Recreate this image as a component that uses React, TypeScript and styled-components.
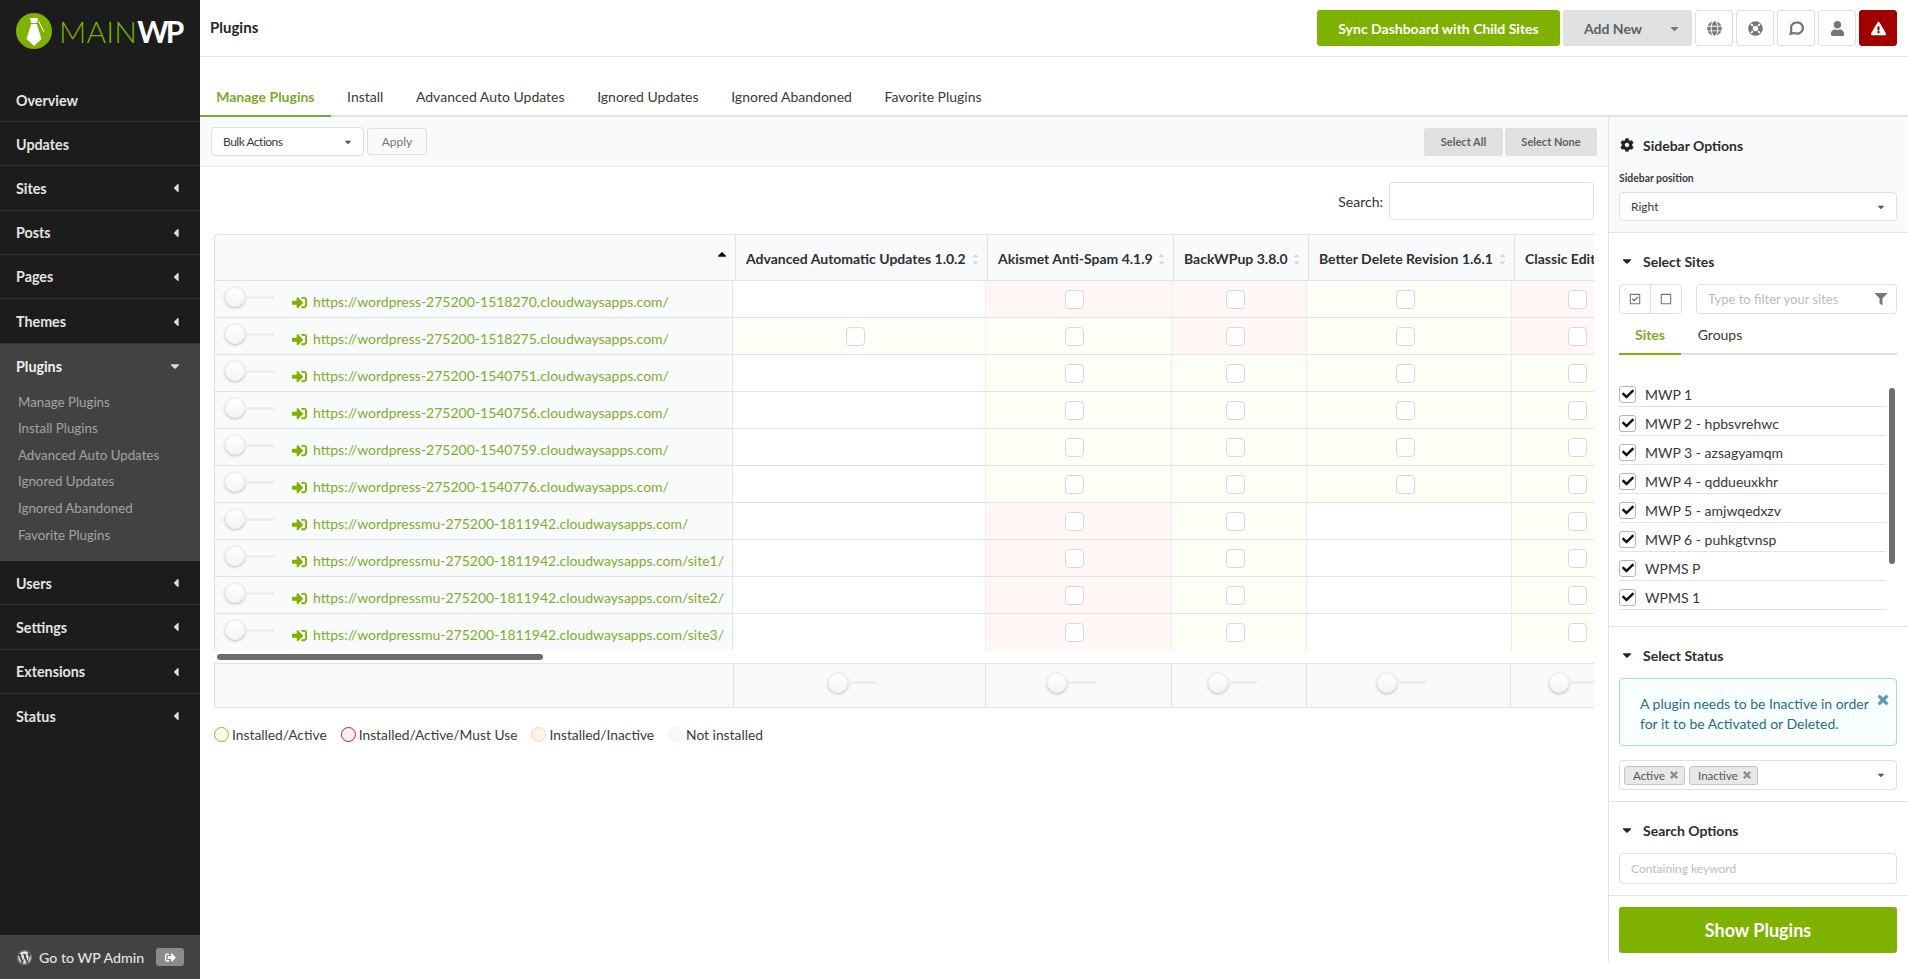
import React from 'react';
import styled, { createGlobalStyle } from 'styled-components';
import {
    FaCaretDown,
    FaCaretLeft,
    FaCaretUp,
    FaCheck,
    FaCog,
    FaExclamationTriangle,
    FaFilter,
    FaGlobe,
    FaLifeRing,
    FaRegCheckSquare,
    FaRegSquare,
    FaSignInAlt,
    FaSignOutAlt,
    FaTimes,
    FaUser,
    FaWordpress,
} from 'react-icons/fa';

const GREEN = '#7fb100';
const LINE = '#e2e3e4';
const PANEL = '#f9fafb';

const GlobalStyle = createGlobalStyle`
    * { box-sizing: border-box; }
    html, body { margin: 0; padding: 0; height: 100%; overflow: hidden; }
    body {
        font-family: Lato, "Open Sans", "Liberation Sans", sans-serif;
        font-size: 14px;
        color: #303030;
        background: #fff;
    }
`;

const Page = styled.div`
    display: flex;
    width: 1908px;
    height: 979px;
`;

/* left navigation */
const Nav = styled.nav`
    width: 200px;
    flex-shrink: 0;
    display: flex;
    flex-direction: column;
    background: #1c1c1c;
`;

const LogoBlock = styled.div`
    height: 78px;
    padding: 13px 0 0 16px;
    display: flex;
    align-items: flex-start;
`;

const LogoText = styled.div`
    margin-left: 7px;
    height: 36px;
    display: flex;
    align-items: center;
    font-size: 30px;
    line-height: 36px;
`;

const LogoMain = styled.span`
    color: ${GREEN};
    font-weight: 300;
    letter-spacing: 0.2px;
`;

const LogoWp = styled.span`
    color: #fff;
    font-weight: 700;
    letter-spacing: -3px;
`;

const NavItem = styled.div<{ $last?: boolean }>`
    height: 44.2px;
    padding: 1px 17px 0 16px;
    display: flex;
    align-items: center;
    justify-content: space-between;
    border-bottom: ${(p) => (p.$last ? 'none' : '1px solid #333')};
    color: #e4e4e4;
    font-size: 14.3px;
    font-weight: 700;
    svg {
        font-size: 14px;
        color: #dcdcdc;
    }
`;

const NavGroup = styled.div`
    height: 218px;
    background: #424242;
    border-top: 1px solid #333;
`;

const NavGroupHead = styled(NavItem)`
    border-bottom: none;
    color: #f0f0f0;
    padding: 0 18px 0 16px;
`;

const NavSubList = styled.div`
    padding-top: 0;
`;

const NavSubItem = styled.div`
    height: 26.6px;
    padding-left: 18px;
    display: flex;
    align-items: center;
    color: #a3a3a3;
    font-size: 13.3px;
`;

const NavFooter = styled.div`
    margin-top: auto;
    height: 44px;
    padding: 0 16px 0 17px;
    display: flex;
    align-items: center;
    background: #424242;
    color: #e4e4e4;
    font-size: 14.2px;
    font-weight: 500;
    svg {
        font-size: 15px;
    }
`;

const NavFooterText = styled.span`
    margin-left: 7px;
    flex: 1;
`;

const NavFooterButton = styled.span`
    width: 28px;
    height: 18px;
    border-radius: 3px;
    background: #8b8b8b;
    display: flex;
    align-items: center;
    justify-content: center;
    color: #fff;
    svg {
        font-size: 11px;
    }
`;

/* top bar */
const Content = styled.div`
    flex: 1;
    min-width: 0;
    display: flex;
    flex-direction: column;
`;

const Header = styled.header`
    height: 57px;
    flex-shrink: 0;
    padding: 0 11px 0 10px;
    display: flex;
    align-items: flex-start;
    justify-content: space-between;
    border-bottom: 1px solid ${LINE};
`;

const PageTitle = styled.h1`
    margin: 17px 0 0;
    font-size: 15px;
    line-height: 20px;
    font-weight: 700;
    color: #262626;
`;

const HeaderActions = styled.div`
    margin-top: 10px;
    display: flex;
    gap: 3px;
`;

const SyncButton = styled.button`
    width: 243px;
    height: 36px;
    border: 0;
    border-radius: 3px;
    background: ${GREEN};
    color: #fff;
    font: 700 14px Lato, sans-serif;
`;

const AddNewButton = styled.button`
    width: 129px;
    height: 36px;
    padding: 0 11px 0 21px;
    border: 0;
    border-radius: 3px;
    background: #e0e1e2;
    color: #5f5f5f;
    font: 700 14px Lato, sans-serif;
    display: flex;
    align-items: center;
    justify-content: space-between;
    svg {
        font-size: 13px;
        color: #777;
    }
`;

const IconButton = styled.button<{ $danger?: boolean }>`
    width: 38px;
    height: 36px;
    padding: 0;
    border-radius: 3px;
    border: 1px solid ${(p) => (p.$danger ? '#a00000' : '#dedfe0')};
    background: ${(p) => (p.$danger ? '#a00000' : '#fff')};
    color: ${(p) => (p.$danger ? '#fff' : '#767676')};
    display: flex;
    align-items: center;
    justify-content: center;
    font-size: 15px;
`;

/* tabs */
const TabBar = styled.div`
    height: 60px;
    flex-shrink: 0;
    display: flex;
    align-items: flex-end;
    border-bottom: 2px solid #e0e0e0;
`;

const Tab = styled.div<{ $active?: boolean }>`
    padding: 0 16.4px 8px 16.2px;
    margin-bottom: -2px;
    line-height: 20px;
    font-size: 14px;
    font-weight: ${(p) => (p.$active ? 700 : 400)};
    color: ${(p) => (p.$active ? '#7cab2a' : '#3a3a3a')};
    border-bottom: 2px solid ${(p) => (p.$active ? '#7aa83c' : 'transparent')};
`;

const Columns = styled.div`
    flex: 1;
    min-height: 0;
    display: flex;
`;

const Main = styled.main`
    flex: 1;
    min-width: 0;
`;

const Toolbar = styled.div`
    height: 50px;
    padding: 0 11px;
    display: flex;
    align-items: center;
    justify-content: space-between;
    background: ${PANEL};
    border-bottom: 1px solid ${LINE};
`;

const ToolGroup = styled.div<{ $gap: number }>`
    display: flex;
    align-items: center;
    gap: ${(p) => p.$gap}px;
`;

const Select = styled.div<{ $width?: number; $height?: number; $tight?: boolean }>`
    width: ${(p) => (p.$width ? `${p.$width}px` : '100%')};
    height: ${(p) => p.$height ?? 29}px;
    padding: 0 10px 0 11px;
    display: flex;
    align-items: center;
    justify-content: space-between;
    background: #fff;
    border: 1px solid #dfe0e1;
    border-radius: 4px;
    font-size: 12px;
    letter-spacing: ${(p) => (p.$tight ? '-0.5px' : '0')};
    color: #3a3a3a;
    svg {
        font-size: 10px;
        color: #555;
    }
`;

const GhostButton = styled.button`
    width: 60px;
    height: 27px;
    padding: 0;
    border: 1px solid #dfe0e1;
    border-radius: 3px;
    background: ${PANEL};
    color: #777;
    font: 12px Lato, sans-serif;
`;

const GreyButton = styled.button<{ $width: number }>`
    width: ${(p) => p.$width}px;
    height: 28px;
    padding: 0;
    border: 0;
    border-radius: 3px;
    background: #dfe0e1;
    color: #5f5f5f;
    font: 700 11px Lato, sans-serif;
`;

const TableArea = styled.div`
    padding: 0 14px;
`;

const SearchRow = styled.div`
    height: 67px;
    padding-top: 15px;
    display: flex;
    align-items: flex-start;
    justify-content: flex-end;
    gap: 6px;
`;

const SearchLabel = styled.label`
    line-height: 40px;
    font-size: 14px;
    color: #333;
`;

const SearchInput = styled.div`
    width: 205px;
    height: 38px;
    border: 1px solid #dfe0e1;
    border-radius: 4px;
    background: #fff;
`;

const TableClip = styled.div`
    width: 1380px;
    overflow: hidden;
`;

const Grid = styled.div<{ $columns: string }>`
    display: grid;
    grid-template-columns: ${(p) => p.$columns};
    width: 1500px;
`;

const HeadRow = styled(Grid)`
    height: 47px;
    background: ${PANEL};
    border-top: 1px solid ${LINE};
    border-left: 1px solid ${LINE};
    border-bottom: 1px solid ${LINE};
    border-top-left-radius: 4px;
`;

const HeadCell = styled.div`
    padding: 2px 7px 0 10px;
    display: flex;
    align-items: center;
    justify-content: space-between;
    white-space: nowrap;
    overflow: hidden;
    border-right: 1px solid ${LINE};
    font-size: 14px;
    font-weight: 700;
    color: #303030;
`;

const FirstHeadCell = styled(HeadCell)`
    justify-content: flex-end;
    align-items: flex-start;
    padding: 13px 6px 0 0;
`;

const SortMark = styled.span`
    display: flex;
    flex-direction: column;
    flex-shrink: 0;
    margin-left: 4px;
    color: #d6d6d6;
    font-size: 9px;
    line-height: 5px;
    svg {
        display: block;
        margin: -1px 0;
    }
`;

const BodyRow = styled(Grid)<{ $last?: boolean }>`
    height: 37px;
    border-left: 1px solid ${LINE};
    border-bottom: ${(p) => (p.$last ? 'none' : `1px solid ${LINE}`)};
`;

const SiteCell = styled.div`
    padding-left: 10px;
    display: flex;
    align-items: flex-start;
    background: ${PANEL};
    border-right: 1px solid ${LINE};
`;

const SliderWrap = styled.span`
    margin-top: 6px;
    display: flex;
    align-items: center;
    flex-shrink: 0;
`;

const SliderKnob = styled.span`
    width: 20px;
    height: 20px;
    border-radius: 50%;
    background: linear-gradient(#fff, #f4f4f4);
    box-shadow: 0 1px 3px rgba(0, 0, 0, 0.28);
    border: 1px solid #eee;
`;

const SliderTrack = styled.span`
    width: 29px;
    height: 3px;
    background: #eeeeee;
`;

const SiteLink = styled.a`
    margin: 11px 0 0 18px;
    display: flex;
    align-items: center;
    line-height: 20px;
    font-size: 14px;
    color: #7fae2d;
    white-space: nowrap;
    svg {
        font-size: 15px;
        margin-right: 6px;
        color: ${GREEN};
    }
`;

const STATE_COLOR = { none: '#fff', active: '#fcfff6', must: '#fff6f6' };

const StatusCell = styled.div<{ $state: keyof typeof STATE_COLOR }>`
    padding-right: 8px;
    display: flex;
    align-items: center;
    justify-content: center;
    background: ${(p) => STATE_COLOR[p.$state]};
    border-right: 1px solid #eceded;
`;

const PluginBox = styled.span`
    width: 19px;
    height: 19px;
    border: 1px solid #d8d9da;
    border-radius: 4px;
    background: #fff;
`;

const ScrollThumb = styled.div`
    width: 326px;
    height: 6px;
    margin: 3px 0 3px 3px;
    border-radius: 3px;
    background: #6e6e6e;
`;

const FootRow = styled(Grid)`
    height: 45px;
    background: ${PANEL};
    border-top: 1px solid ${LINE};
    border-left: 1px solid ${LINE};
    border-bottom: 1px solid ${LINE};
    border-bottom-left-radius: 4px;
`;

const FootCell = styled.div`
    padding: 0 14px 6px 0;
    display: flex;
    align-items: center;
    justify-content: center;
    border-right: 1px solid ${LINE};
    ${SliderWrap} {
        margin-top: 0;
    }
`;

const Legend = styled.div`
    margin-top: 16px;
    display: flex;
    height: 20px;
    align-items: center;
    font-size: 13.8px;
    color: #3c3c3c;
`;

const LegendDot = styled.span<{ $fill: string; $ring: string; $gap: number }>`
    width: 15px;
    height: 15px;
    margin-right: 3px;
    margin-left: ${(p) => p.$gap}px;
    border-radius: 50%;
    background: ${(p) => p.$fill};
    border: 1px solid ${(p) => p.$ring};
`;

/* right options column */
const Aside = styled.aside`
    width: 300px;
    flex-shrink: 0;
    height: 846px;
    display: flex;
    flex-direction: column;
    border-left: 1px solid ${LINE};
`;

const AsideSection = styled.section<{ $tinted?: boolean; $last?: boolean }>`
    padding: 18px 11px 11px 10px;
    background: ${(p) => (p.$tinted ? PANEL : '#fff')};
    border-bottom: ${(p) => (p.$last ? 'none' : `1px solid ${LINE}`)};
`;

const SectionTitle = styled.h3`
    margin: 0;
    height: 20px;
    display: flex;
    align-items: center;
    font-size: 14px;
    font-weight: 700;
    color: #2c2c2c;
    svg {
        font-size: 14px;
        margin: 0 9px 0 1px;
        color: #222;
    }
`;

const FieldLabel = styled.div`
    margin: 16px 0 7px;
    height: 14px;
    line-height: 14px;
    font-size: 10.4px;
    font-weight: 700;
    color: #3a3a3a;
`;

const SiteControls = styled.div`
    margin-top: 13px;
    display: flex;
    gap: 14px;
`;

const BoxToggle = styled.div`
    width: 63px;
    height: 30px;
    display: flex;
    border: 1px solid #dfe0e1;
    border-radius: 4px;
    background: #fff;
`;

const BoxToggleHalf = styled.span`
    flex: 1;
    display: flex;
    align-items: center;
    justify-content: center;
    color: #777;
    font-size: 12px;
    & + & {
        border-left: 1px solid #dfe0e1;
    }
`;

const TextField = styled.div<{ $height: number; $size: number }>`
    flex: 1;
    height: ${(p) => p.$height}px;
    padding: 0 9px 0 11px;
    display: flex;
    align-items: center;
    justify-content: space-between;
    border: 1px solid #dfe0e1;
    border-radius: 4px;
    background: #fff;
    font-size: ${(p) => p.$size}px;
    color: #bdbdbd;
    svg {
        font-size: 12px;
        color: #777;
    }
`;

const SmallField = styled(TextField)`
    margin-top: 13px;
`;

const SiteTabs = styled.div`
    height: 41px;
    display: flex;
    border-bottom: 2px solid #e0e0e0;
`;

const SiteTab = styled.div<{ $active?: boolean; $width: number }>`
    width: ${(p) => p.$width}px;
    margin-bottom: -2px;
    padding-top: 11px;
    text-align: center;
    line-height: 20px;
    font-size: 14px;
    font-weight: ${(p) => (p.$active ? 700 : 400)};
    color: ${(p) => (p.$active ? '#7cab2a' : '#3a3a3a')};
    border-bottom: 2px solid ${(p) => (p.$active ? GREEN : 'transparent')};
`;

const SiteListWrap = styled.div`
    margin: 23px 0 5px;
    display: flex;
    align-items: flex-start;
`;

const SiteList = styled.div`
    width: 267px;
`;

const SiteRow = styled.div`
    height: 29px;
    padding-top: 4px;
    display: flex;
    align-items: center;
    border-bottom: 1px solid ${LINE};
    font-size: 14px;
    color: #383838;
`;

const SiteCheck = styled.span`
    width: 17px;
    height: 17px;
    margin-right: 9px;
    display: flex;
    align-items: center;
    justify-content: center;
    border: 1px solid #b5b5b5;
    border-radius: 3px;
    background: #fff;
    color: #111;
    font-size: 12px;
`;

const ListThumb = styled.div`
    width: 6px;
    height: 176px;
    margin: 10px 0 0 3px;
    border-radius: 3px;
    background: #6e6e6e;
`;

const Notice = styled.div`
    margin-top: 13px;
    height: 68px;
    padding: 15px 6px 0 20px;
    display: flex;
    align-items: flex-start;
    justify-content: space-between;
    border: 1px solid #a9d5de;
    border-radius: 4px;
    background: #f8ffff;
    color: #276f86;
    font-size: 14px;
    line-height: 20px;
    svg {
        flex-shrink: 0;
        margin-top: -1px;
        font-size: 14px;
        color: #5b9bb0;
        stroke: currentColor;
        stroke-width: 30;
    }
`;

const MultiSelect = styled(Select)`
    margin-top: 14px;
    padding-left: 4px;
`;

const ChipGroup = styled.span`
    display: flex;
    gap: 4px;
`;

const Chip = styled.span`
    height: 19px;
    padding: 0 5px 0 8px;
    display: flex;
    align-items: center;
    gap: 4px;
    border: 1px solid #c4c4c4;
    border-radius: 3px;
    background: #e8e8e8;
    color: #555;
    font-size: 11.5px;
    svg {
        font-size: 10px;
        color: #8a8a8a;
        stroke: currentColor;
        stroke-width: 40;
    }
`;

const ActionSection = styled.div`
    padding: 11px 11px 10px 10px;
`;

const ShowButton = styled.button`
    width: 100%;
    height: 46px;
    border: 0;
    border-radius: 3px;
    background: ${GREEN};
    color: #fff;
    font: 700 18px Lato, sans-serif;
`;

const HEAD_COLUMNS = '521px 252px 186px 135px 206px 199px';
const BODY_COLUMNS = '518px 253px 186px 135px 205px 140px';
const FOOT_COLUMNS = '519px 252px 186px 135px 204px 140px';

const MENU_TOP = ['Overview', 'Updates', 'Sites', 'Posts', 'Pages', 'Themes'];
const MENU_BOTTOM = ['Users', 'Settings', 'Extensions', 'Status'];
const SUB_MENU = [
    'Manage Plugins',
    'Install Plugins',
    'Advanced Auto Updates',
    'Ignored Updates',
    'Ignored Abandoned',
    'Favorite Plugins',
];
const NO_ARROW = ['Overview', 'Updates'];

const TABS = [
    'Manage Plugins',
    'Install',
    'Advanced Auto Updates',
    'Ignored Updates',
    'Ignored Abandoned',
    'Favorite Plugins',
];

const PLUGINS = [
    'Advanced Automatic Updates 1.0.2',
    'Akismet Anti-Spam 4.1.9',
    'BackWPup 3.8.0',
    'Better Delete Revision 1.6.1',
    'Classic Editor 1.6',
];

type CellState = keyof typeof STATE_COLOR;

const N: CellState = 'none';
const A: CellState = 'active';
const M: CellState = 'must';

const ROWS: { url: string; cells: CellState[] }[] = [
    { url: 'https://wordpress-275200-1518270.cloudwaysapps.com/', cells: [N, M, M, A, M] },
    { url: 'https://wordpress-275200-1518275.cloudwaysapps.com/', cells: [A, A, M, A, M] },
    { url: 'https://wordpress-275200-1540751.cloudwaysapps.com/', cells: [N, A, A, A, A] },
    { url: 'https://wordpress-275200-1540756.cloudwaysapps.com/', cells: [N, A, A, A, A] },
    { url: 'https://wordpress-275200-1540759.cloudwaysapps.com/', cells: [N, A, A, A, A] },
    { url: 'https://wordpress-275200-1540776.cloudwaysapps.com/', cells: [N, A, A, A, A] },
    { url: 'https://wordpressmu-275200-1811942.cloudwaysapps.com/', cells: [N, M, A, N, A] },
    { url: 'https://wordpressmu-275200-1811942.cloudwaysapps.com/site1/', cells: [N, M, A, N, A] },
    { url: 'https://wordpressmu-275200-1811942.cloudwaysapps.com/site2/', cells: [N, M, A, N, A] },
    { url: 'https://wordpressmu-275200-1811942.cloudwaysapps.com/site3/', cells: [N, M, A, N, A] },
];

const SITES = [
    'MWP 1',
    'MWP 2 - hpbsvrehwc',
    'MWP 3 - azsagyamqm',
    'MWP 4 - qddueuxkhr',
    'MWP 5 - amjwqedxzv',
    'MWP 6 - puhkgtvnsp',
    'WPMS P',
    'WPMS 1',
];

const LogoMark = () => (
    <svg width="36" height="36" viewBox="0 0 36 36">
        <circle cx="18" cy="18" r="18" fill={GREEN} />
        <path d="M14 5 L22 5 L21 10 L15 10 Z" fill="#fff" />
        <path d="M15.2 11 L20.8 11 L25.5 26 L18 33 L10.5 26 Z" fill="#fff" />
        <path d="M22.5 8 L28 19" stroke="#fff" strokeWidth="1" fill="none" />
    </svg>
);

const CommentIcon = () => (
    <svg width="16" height="16" viewBox="0 0 24 24" fill="none" stroke="currentColor" strokeWidth="3.4">
        <path d="M13 3.5a8.5 8.5 0 0 0-8 11.2L4 20.5l5.6-1.2A8.5 8.5 0 1 0 13 3.5z" />
    </svg>
);

const Slider = () => (
    <SliderWrap>
        <SliderKnob />
        <SliderTrack />
    </SliderWrap>
);

const App = () => {
    return (
        <Page>
            <GlobalStyle />
            <Nav>
                <LogoBlock>
                    <LogoMark />
                    <LogoText>
                        <LogoMain>MAIN</LogoMain>
                        <LogoWp>WP</LogoWp>
                    </LogoText>
                </LogoBlock>
                {MENU_TOP.map((label, i) => (
                    <NavItem key={label} $last={i === MENU_TOP.length - 1}>
                        {label}
                        {!NO_ARROW.includes(label) && <FaCaretLeft />}
                    </NavItem>
                ))}
                <NavGroup>
                    <NavGroupHead>
                        Plugins
                        <FaCaretDown />
                    </NavGroupHead>
                    <NavSubList>
                        {SUB_MENU.map((label) => (
                            <NavSubItem key={label}>{label}</NavSubItem>
                        ))}
                    </NavSubList>
                </NavGroup>
                {MENU_BOTTOM.map((label, i) => (
                    <NavItem key={label} $last={i === MENU_BOTTOM.length - 1}>
                        {label}
                        <FaCaretLeft />
                    </NavItem>
                ))}
                <NavFooter>
                    <FaWordpress />
                    <NavFooterText>Go to WP Admin</NavFooterText>
                    <NavFooterButton>
                        <FaSignOutAlt />
                    </NavFooterButton>
                </NavFooter>
            </Nav>
            <Content>
                <Header>
                    <PageTitle>Plugins</PageTitle>
                    <HeaderActions>
                        <SyncButton>Sync Dashboard with Child Sites</SyncButton>
                        <AddNewButton>
                            Add New
                            <FaCaretDown />
                        </AddNewButton>
                        <IconButton>
                            <FaGlobe />
                        </IconButton>
                        <IconButton>
                            <FaLifeRing />
                        </IconButton>
                        <IconButton>
                            <CommentIcon />
                        </IconButton>
                        <IconButton>
                            <FaUser />
                        </IconButton>
                        <IconButton $danger>
                            <FaExclamationTriangle />
                        </IconButton>
                    </HeaderActions>
                </Header>
                <TabBar>
                    {TABS.map((label, i) => (
                        <Tab key={label} $active={i === 0}>
                            {label}
                        </Tab>
                    ))}
                </TabBar>
                <Columns>
                    <Main>
                        <Toolbar>
                            <ToolGroup $gap={3}>
                                <Select $width={153} $tight>
                                    Bulk Actions
                                    <FaCaretDown />
                                </Select>
                                <GhostButton>Apply</GhostButton>
                            </ToolGroup>
                            <ToolGroup $gap={2}>
                                <GreyButton $width={79}>Select All</GreyButton>
                                <GreyButton $width={92}>Select None</GreyButton>
                            </ToolGroup>
                        </Toolbar>
                        <TableArea>
                            <SearchRow>
                                <SearchLabel>Search:</SearchLabel>
                                <SearchInput />
                            </SearchRow>
                            <TableClip>
                                <HeadRow $columns={HEAD_COLUMNS}>
                                    <FirstHeadCell>
                                        <SortMark>
                                            <FaCaretUp color="#111" size={14} />
                                        </SortMark>
                                    </FirstHeadCell>
                                    {PLUGINS.map((name) => (
                                        <HeadCell key={name}>
                                            {name}
                                            <SortMark>
                                                <FaCaretUp />
                                                <FaCaretDown />
                                            </SortMark>
                                        </HeadCell>
                                    ))}
                                </HeadRow>
                                {ROWS.map((row, i) => (
                                    <BodyRow key={row.url} $columns={BODY_COLUMNS} $last={i === ROWS.length - 1}>
                                        <SiteCell>
                                            <Slider />
                                            <SiteLink>
                                                <FaSignInAlt />
                                                {row.url}
                                            </SiteLink>
                                        </SiteCell>
                                        {row.cells.map((state, c) => (
                                            <StatusCell key={c} $state={state}>
                                                {state !== 'none' && <PluginBox />}
                                            </StatusCell>
                                        ))}
                                    </BodyRow>
                                ))}
                                <ScrollThumb />
                                <FootRow $columns={FOOT_COLUMNS}>
                                    <FootCell />
                                    {PLUGINS.map((name) => (
                                        <FootCell key={name}>
                                            <Slider />
                                        </FootCell>
                                    ))}
                                </FootRow>
                            </TableClip>
                            <Legend>
                                <LegendDot $fill="#f9fdf0" $ring="#8cb53c" $gap={0} />
                                Installed/Active
                                <LegendDot $fill="#fff0f0" $ring="#a5222a" $gap={14} />
                                Installed/Active/Must Use
                                <LegendDot $fill="#fff3e2" $ring="#f6d5a8" $gap={14} />
                                Installed/Inactive
                                <LegendDot $fill="#f8f8f8" $ring="#f3f3f3" $gap={14} />
                                Not installed
                            </Legend>
                        </TableArea>
                    </Main>
                    <Aside>
                        <AsideSection $tinted>
                            <SectionTitle>
                                <FaCog />
                                Sidebar Options
                            </SectionTitle>
                            <FieldLabel>Sidebar position</FieldLabel>
                            <Select>
                                Right
                                <FaCaretDown />
                            </Select>
                        </AsideSection>
                        <AsideSection>
                            <SectionTitle>
                                <FaCaretDown />
                                Select Sites
                            </SectionTitle>
                            <SiteControls>
                                <BoxToggle>
                                    <BoxToggleHalf>
                                        <FaRegCheckSquare />
                                    </BoxToggleHalf>
                                    <BoxToggleHalf>
                                        <FaRegSquare />
                                    </BoxToggleHalf>
                                </BoxToggle>
                                <TextField $height={30} $size={13}>
                                    Type to filter your sites
                                    <FaFilter />
                                </TextField>
                            </SiteControls>
                            <SiteTabs>
                                <SiteTab $active $width={62}>
                                    Sites
                                </SiteTab>
                                <SiteTab $width={78}>Groups</SiteTab>
                            </SiteTabs>
                            <SiteListWrap>
                                <SiteList>
                                    {SITES.map((site) => (
                                        <SiteRow key={site}>
                                            <SiteCheck>
                                                <FaCheck />
                                            </SiteCheck>
                                            {site}
                                        </SiteRow>
                                    ))}
                                </SiteList>
                                <ListThumb />
                            </SiteListWrap>
                        </AsideSection>
                        <AsideSection>
                            <SectionTitle>
                                <FaCaretDown />
                                Select Status
                            </SectionTitle>
                            <Notice>
                                <span>A plugin needs to be Inactive in order for it to be Activated or Deleted.</span>
                                <FaTimes />
                            </Notice>
                            <MultiSelect $height={30}>
                                <ChipGroup>
                                    <Chip>
                                        Active
                                        <FaTimes />
                                    </Chip>
                                    <Chip>
                                        Inactive
                                        <FaTimes />
                                    </Chip>
                                </ChipGroup>
                                <FaCaretDown />
                            </MultiSelect>
                        </AsideSection>
                        <AsideSection>
                            <SectionTitle>
                                <FaCaretDown />
                                Search Options
                            </SectionTitle>
                            <SmallField $height={31} $size={12}>
                                Containing keyword
                            </SmallField>
                        </AsideSection>
                        <ActionSection>
                            <ShowButton>Show Plugins</ShowButton>
                        </ActionSection>
                    </Aside>
                </Columns>
            </Content>
        </Page>
    );
};

export default App;
